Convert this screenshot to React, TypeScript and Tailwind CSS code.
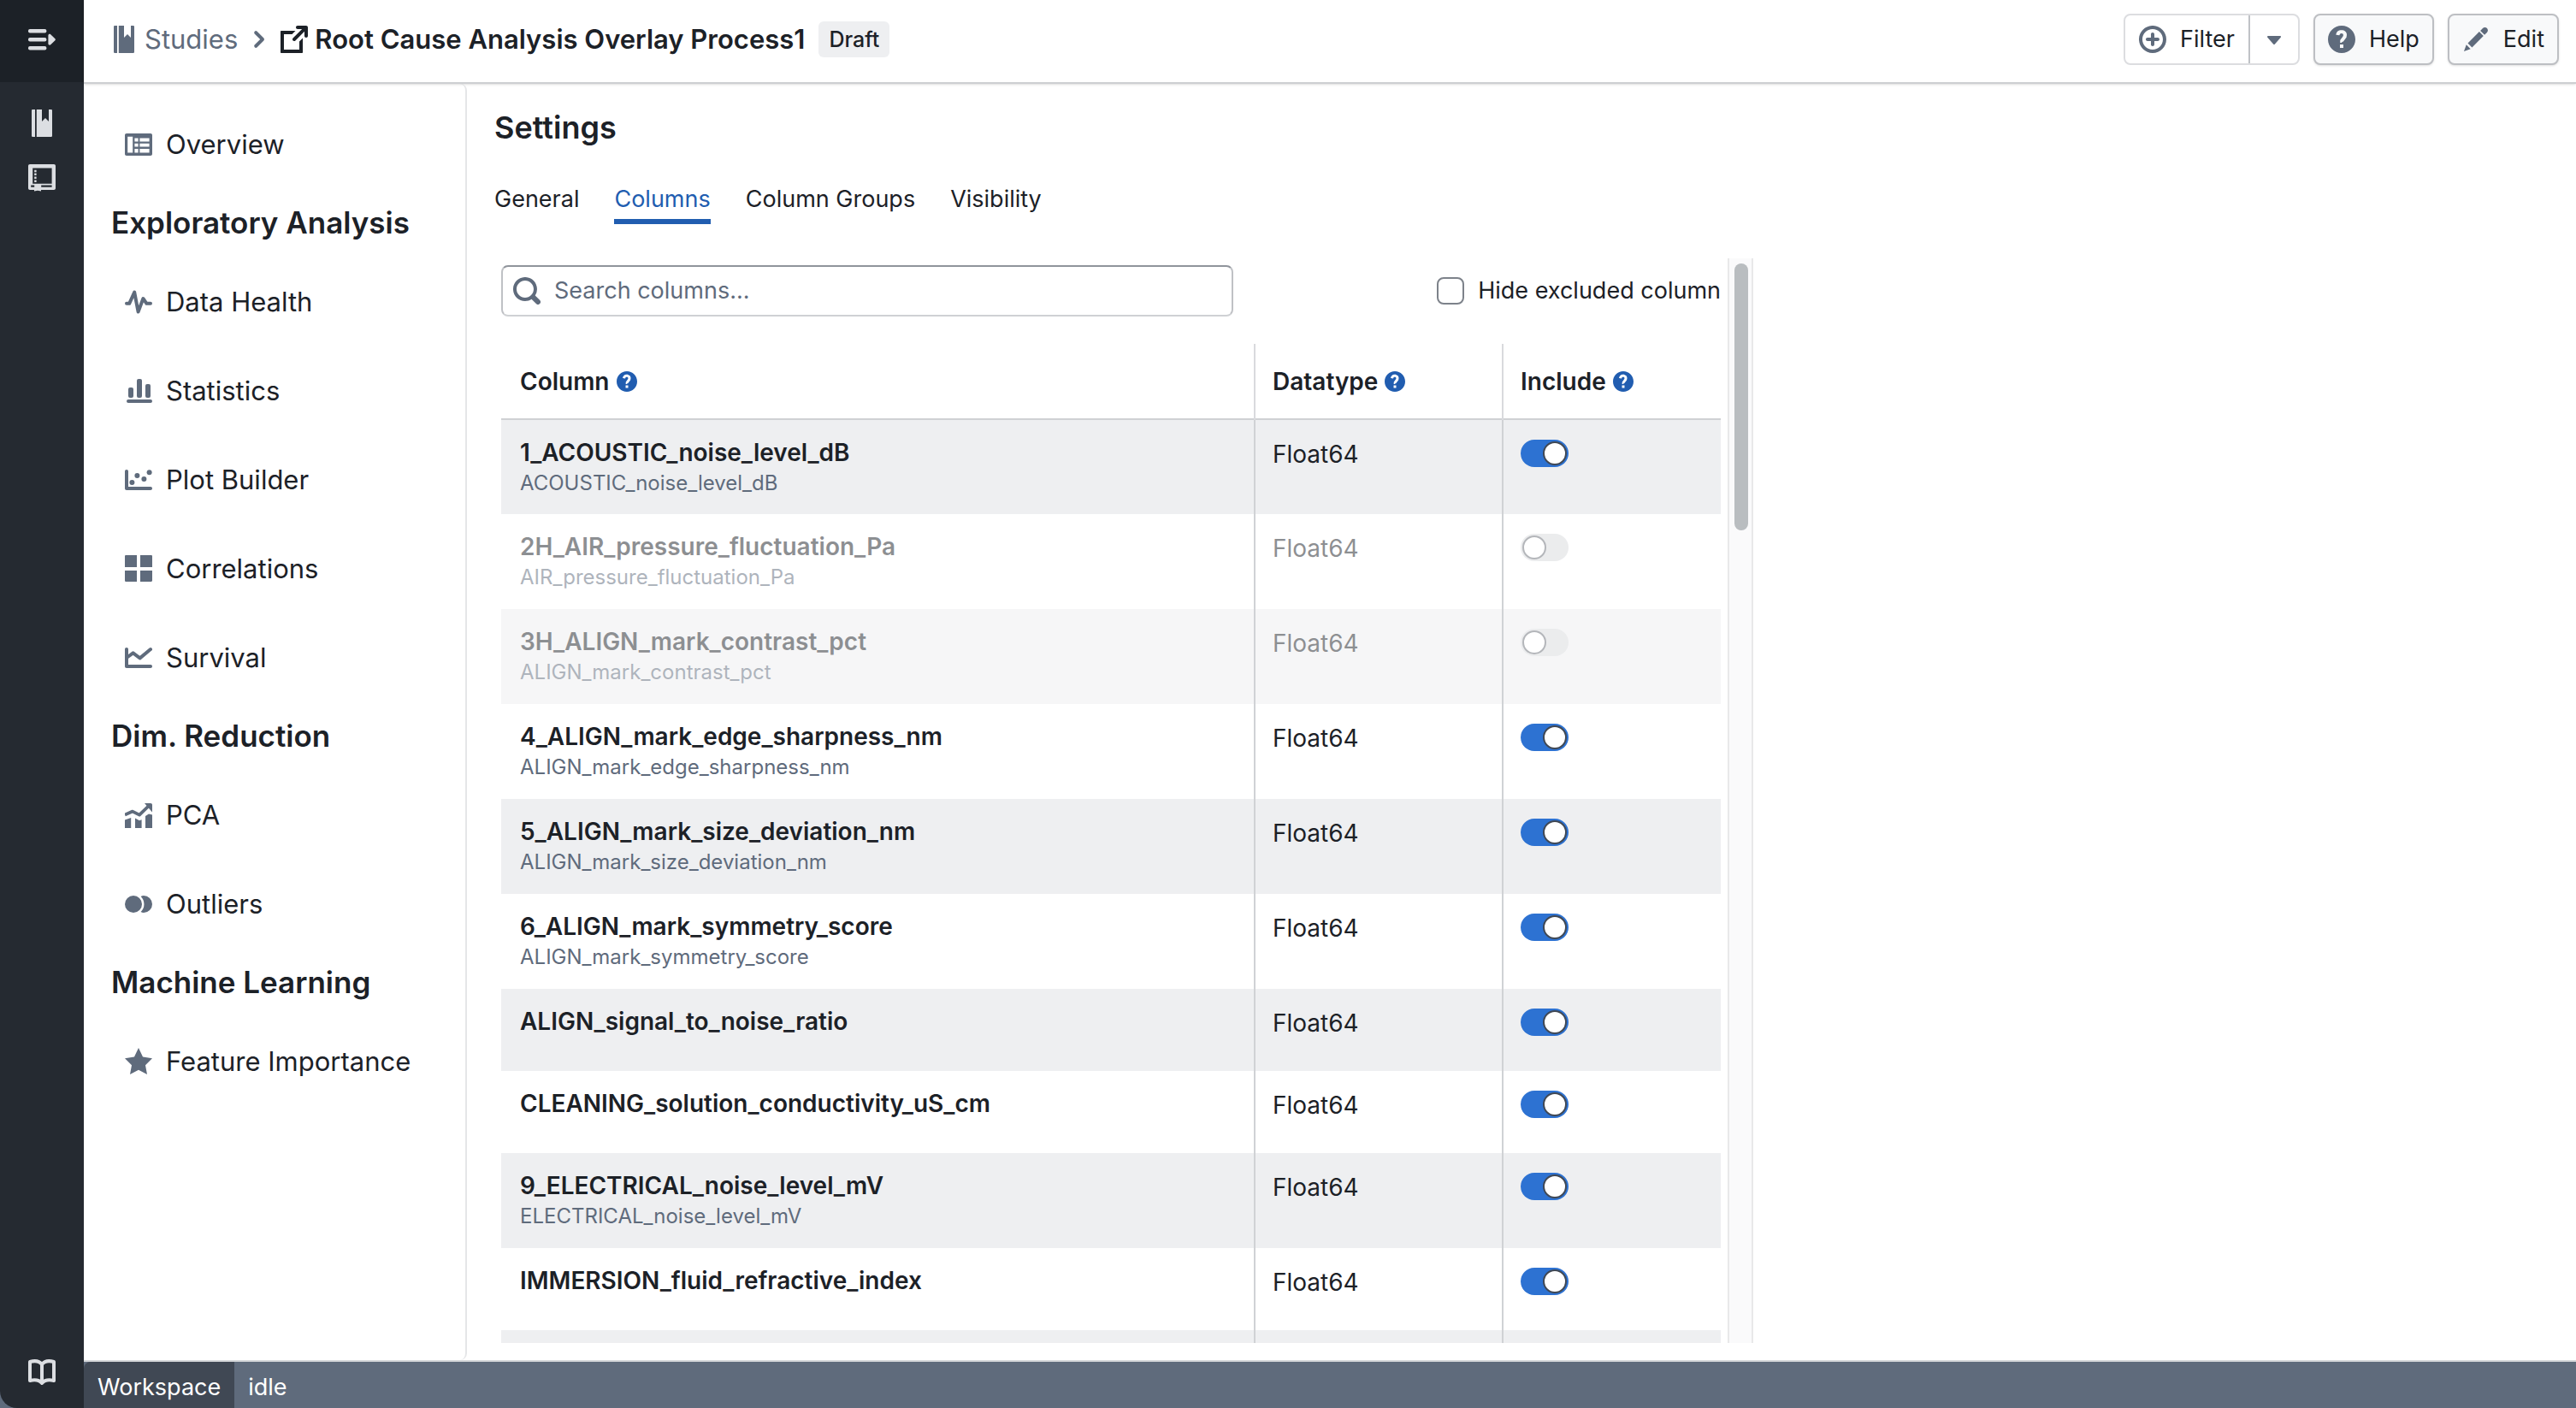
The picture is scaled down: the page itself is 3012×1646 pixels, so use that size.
import type { ReactNode } from "react";

function Icon({ size = 32, className = "", children }: { size?: number; className?: string; children: ReactNode }) {
  return (
    <svg width={size} height={size} viewBox="0 0 16 16" fill="currentColor" aria-hidden="true" className={`shrink-0 ${className}`}>
      {children}
    </svg>
  );
}

const icons = {
  menuOpen: (
    <>
      <rect x="0" y="2" width="10.7" height="2.2" rx="1" />
      <rect x="0" y="7" width="10.7" height="2.2" rx="1" />
      <rect x="0" y="12" width="10.7" height="2.2" rx="1" />
      <path d="M11.7 5.7c0-.8.9-1.1 1.4-.6l2.6 2.5c.3.3.3.7 0 1l-2.6 2.500c-.5.5-1.400.2-1.400-.6z" />
    </>
  ),
  studies: (
    <>
      <path d="M2.600 0H4v16H2.600a.6.6 0 0 1-.6-.6V.6c0-.3.300-.6.6-.6z" />
      <path d="M4.900 0H8v7l2-2 2 2V0h1.400c.3 0 .6.3.6.6v14.800a.6.6 0 0 1-.6.6H4.900z" />
    </>
  ),
  notebook: (
    <>
      <path fillRule="evenodd" d="M1 0h14c.6 0 1 .4 1 1v13c0 .6-.4 1-1 1H7.500v.8L5.500 15.400l-2 .4V15H1c-.6 0-1-.4-1-1V1c0-.6.4-1 1-1zM2.600 2.300v9.100h11.200V2.300zM1.600 12.300v1.100h2v-1.100zM7.600 12.300v1.100h6.200v-1.100z" />
      <path d="M3.600 3.400h1.200v1.200H3.600zM3.600 5.300h1.200v1.200H3.600zM3.600 7.300h1.200v1.200H3.600zM3.600 9.300h1.200v1.200H3.600z" />
    </>
  ),
  manual: (
    <path
      fill="none"
      stroke="currentColor"
      strokeWidth="2"
      strokeLinejoin="round"
      strokeLinecap="round"
      d="M8 3.500C6.500 1.500 3.500 1.300 1 2v11c2.500-.6 5.500-.3 7 1.500 1.500-1.800 4.500-2.100 7-1.500V2c-2.500-.7-5.500-.5-7 1.500zm0 0v10.500"
    />
  ),
  chevron: <path d="M10.700 7.300l-4-4a1 1 0 0 0-1.400 1.400L8.600 8l-3.300 3.300a1 1 0 0 0 1.400 1.400l4-4a1 1 0 0 0 0-1.400z" />,
  share: (
    <>
      <path d="M10.990 13.990h-9v-9h4.760l2-2H.500c-.3 0-.5.2-.5.5v12c0 .3.200.5.5.5h12c.3 0 .5-.2.500-.5V7.240l-2 2v4.750z" />
      <path d="M14.990 0h-5c-.55 0-1 .45-1 1s.45 1 1 1h2.590L7.290 7.290a1 1 0 0 0-.3.7 1.003 1.003 0 0 0 1.710.710l5.290-5.290V6c0 .55.45 1 1 1s1-.45 1-1V1c0-.55-.45-1-1-1z" />
    </>
  ),
  add: (
    <path d="M10.990 6.990h-2v-2c0-.55-.45-1-1-1s-1 .45-1 1v2h-2c-.55 0-1 .45-1 1s.45 1 1 1h2v2c0 .55.45 1 1 1s1-.45 1-1v-2h2c.55 0 1-.45 1-1s-.45-1-1-1zm-3-7c-4.420 0-8 3.580-8 8s3.580 8 8 8 8-3.580 8-8-3.580-8-8-8zm0 14c-3.310 0-6-2.690-6-6s2.690-6 6-6 6 2.690 6 6-2.690 6-6 6z" />
  ),
  caret: <path d="M12 6.500c0-.28-.22-.5-.5-.5h-7a.495.495 0 0 0-.37.830l3.500 4c.09.1.22.17.37.17s.28-.07.370-.170l3.500-4c.08-.09.13-.2.13-.33z" />,
  help: (
    <path d="M8 0C3.580 0 0 3.580 0 8s3.580 8 8 8 8-3.580 8-8-3.580-8-8-8zm1 13H7v-2h2v2zm1.930-6.520c-.14.320-.350.640-.620.970L9.250 8.830c-.12.150-.240.290-.280.420-.4.130-.9.300-.9.520V10H7.120V8.880s.05-.51.210-.71L8.400 6.730c.22-.26.350-.490.440-.680.090-.190.120-.380.120-.580 0-.3-.1-.550-.280-.750-.180-.190-.440-.280-.760-.280-.330 0-.590.100-.780.290-.190.190-.330.460-.4.810a.2.200 0 0 1-.200.110l-1.700-.250c-.12-.01-.160-.080-.140-.170.140-.83.470-1.470.980-1.930.530-.480 1.250-.720 2.150-.720.470 0 .9.070 1.290.220s.72.340 1 .590c.280.250.490.550.650.890.150.350.220.720.220 1.120s-.07.750-.21 1.080z" />
  ),
  edit: (
    <path d="M3.250 10.260l2.470 2.470 6.690-6.690-2.460-2.480-6.700 6.700zM.990 14.990l3.860-1.390-2.460-2.440-1.400 3.830zm12.250-14c-.480 0-.92.200-1.240.510l-1.440 1.440 2.470 2.470 1.440-1.440c.32-.32.510-.750.510-1.240.010-.950-.770-1.740-1.740-1.740z" />
  ),
  search: (
    <path d="M15.550 13.430l-2.670-2.680a6.940 6.940 0 0 0 1.110-3.760c0-3.870-3.130-7-7-7s-7 3.130-7 7 3.130 7 7 7c1.390 0 2.680-.42 3.760-1.110l2.680 2.670a1.498 1.498 0 1 0 2.120-2.120zm-8.560-1.440c-2.760 0-5-2.240-5-5s2.240-5 5-5 5 2.240 5 5-2.240 5-5 5z" />
  ),
  overview: (
    <path fillRule="evenodd" d="M1 1.500h14c.6 0 1 .4 1 1v11c0 .6-.4 1-1 1H1c-.6 0-1-.4-1-1v-11c0-.6.4-1 1-1zM1.600 3.400v9.300h3V3.400zM5.700 4.200v2.100h2.100V4.200zM8.700 4.200v2.100h5.600V4.200zM5.700 7.400v1.900h2.100V7.400zM8.700 7.400v1.900h5.600V7.400zM5.700 10.500v2.200h2.100v-2.200zM8.700 10.500v2.200h5.600v-2.200z" />
  ),
  pulse: (
    <path fill="none" stroke="currentColor" strokeWidth="2" strokeLinecap="round" strokeLinejoin="round" d="M1 8.900h1.600L5.600 2.300l2.200 11.500L10.700 6l2 2.900H15" />
  ),
  bars: (
    <>
      <rect x="1" y="13" width="15" height="2" rx="1" />
      <rect x="2" y="6" width="3" height="6" rx="1" />
      <rect x="7" y="1" width="3" height="11" rx="1" />
      <rect x="12" y="4" width="3" height="8" rx="1" />
    </>
  ),
  scatter: (
    <>
      <path d="M1 2c-.6 0-1 .4-1 1v10c0 .6.4 1 1 1h14c.6 0 1-.4 1-1s-.4-1-1-1H2V3c0-.6-.4-1-1-1z" />
      <circle cx="4.200" cy="9.500" r="1.500" />
      <circle cx="7.200" cy="5.500" r="1.500" />
      <circle cx="11.200" cy="7.500" r="1.500" />
      <circle cx="14.300" cy="3.600" r="1.500" />
    </>
  ),
  grid: <path d="M.6 0H7v7H0V.6C0 .3.300 0 .6 0zM9 0h6.400c.3 0 .6.300.6.600V7H9zM0 9h7v6.500H.6a.6.6 0 0 1-.6-.6zM9 9h7v5.900c0 .3-.3.600-.6.600H9z" />,
  line: (
    <>
      <path d="M1 2c-.6 0-1 .4-1 1v10c0 .6.4 1 1 1h14c.6 0 1-.4 1-1s-.4-1-1-1H2V3c0-.6-.4-1-1-1z" />
      <path fill="none" stroke="currentColor" strokeWidth="2" strokeLinecap="round" strokeLinejoin="round" d="M1 8l3.800-2.800 4 3L15 3" />
    </>
  ),
  trend: (
    <>
      <path d="M0 10.800L3.600 9.500V15.500H0zM6 9.800l2.500 1.300 1.300-.5v4.900H6zM12 8.500l2-1.300 2 .6v7.700h-4z" />
      <path fill="none" stroke="currentColor" strokeWidth="1.900" strokeLinejoin="round" d="M0 7.800l4.500-2 4 2L14 2.500" />
      <path d="M11.500 1H15c.6 0 1 .4 1 1v4.200z" />
    </>
  ),
  overlap: (
    <>
      <circle cx="5" cy="8" r="5" />
      <path d="M9.300 3.500A6.200 6.200 0 0 1 9.300 12.500 5 5 0 0 0 11 13a5 5 0 0 0 0-10 5 5 0 0 0-1.700.5z" />
    </>
  ),
  star: <path d="M8 0l2.500 5.300 5.500.8-4 4 1 5.400-5-2.600-5 2.600 1-5.400-4-4 5.500-.8z" />,
};

const nav = [
  { items: [{ icon: icons.overview, label: "Overview" }] },
  {
    title: "Exploratory Analysis",
    items: [
      { icon: icons.pulse, label: "Data Health" },
      { icon: icons.bars, label: "Statistics" },
      { icon: icons.scatter, label: "Plot Builder" },
      { icon: icons.grid, label: "Correlations" },
      { icon: icons.line, label: "Survival" },
    ],
  },
  {
    title: "Dim. Reduction",
    items: [
      { icon: icons.trend, label: "PCA" },
      { icon: icons.overlap, label: "Outliers" },
    ],
  },
  { title: "Machine Learning", items: [{ icon: icons.star, label: "Feature Importance" }] },
];

const tabs = ["General", "Columns", "Column Groups", "Visibility"];

const rows = [
  { name: "1_ACOUSTIC_noise_level_dB", source: "ACOUSTIC_noise_level_dB", on: true },
  { name: "2H_AIR_pressure_fluctuation_Pa", source: "AIR_pressure_fluctuation_Pa", on: false },
  { name: "3H_ALIGN_mark_contrast_pct", source: "ALIGN_mark_contrast_pct", on: false },
  { name: "4_ALIGN_mark_edge_sharpness_nm", source: "ALIGN_mark_edge_sharpness_nm", on: true },
  { name: "5_ALIGN_mark_size_deviation_nm", source: "ALIGN_mark_size_deviation_nm", on: true },
  { name: "6_ALIGN_mark_symmetry_score", source: "ALIGN_mark_symmetry_score", on: true },
  { name: "ALIGN_signal_to_noise_ratio", on: true },
  { name: "CLEANING_solution_conductivity_uS_cm", on: true },
  { name: "9_ELECTRICAL_noise_level_mV", source: "ELECTRICAL_noise_level_mV", on: true },
  { name: "IMMERSION_fluid_refractive_index", on: true },
];

function Rail() {
  return (
    <aside className="flex w-[98px] shrink-0 flex-col items-center rounded-bl-[20px] bg-[#252a31] text-[#dcdee2]">
      <button aria-label="Expand menu" className="flex h-24 w-full items-center justify-center bg-[#1c2127] pb-1">
        <Icon>{icons.menuOpen}</Icon>
      </button>
      <button aria-label="Studies" className="mt-4 flex h-16 w-full items-center justify-center">
        <Icon>{icons.studies}</Icon>
      </button>
      <button aria-label="Notebooks" className="flex h-16 w-full items-center justify-center">
        <Icon>{icons.notebook}</Icon>
      </button>
      <button aria-label="Manual" className="mt-auto mb-[10px] flex h-16 w-full items-center justify-center">
        <Icon>{icons.manual}</Icon>
      </button>
    </aside>
  );
}

function Header() {
  return (
    <header className="relative flex h-[98px] shrink-0 items-center border-b-2 border-[#cdcfd2] pr-5 pb-1 pl-[31px] shadow-sm">
      <a href="#studies" className="flex items-center gap-2 text-[31px] text-[#5f6b7c]">
        <Icon>{icons.studies}</Icon>
        Studies
      </a>
      <Icon className="mx-[9px] text-[#5f6b7c]">{icons.chevron}</Icon>
      <h1 className="flex items-center gap-2 text-[31px] font-semibold">
        <Icon>{icons.share}</Icon>
        Root Cause Analysis Overlay Process1
      </h1>
      <span className="ml-4 rounded-md bg-[#eeeff1] px-3 text-[25px]/[42px] font-medium">Draft</span>
      <div className="ml-auto flex gap-4 text-[27px]">
        <div className="flex h-[60px] rounded-lg border-2 border-[#dcdde0]">
          <button className="flex items-center gap-4 border-r-2 border-[#bfc2c6] px-4">
            <Icon className="text-[#5f6b7c]">{icons.add}</Icon>
            Filter
          </button>
          <button aria-label="More filters" className="px-3 text-[#5f6b7c]">
            <Icon>{icons.caret}</Icon>
          </button>
        </div>
        <button className="flex h-[60px] items-center gap-4 rounded-lg border-2 border-[#bdbfc3] bg-[#f8f9fa] px-[15px] shadow-sm">
          <Icon className="text-[#5f6b7c]">{icons.help}</Icon>
          Help
        </button>
        <button className="flex h-[60px] items-center gap-4 rounded-lg border-2 border-[#bdbfc3] bg-[#f8f9fa] px-[15px] shadow-sm">
          <Icon className="text-[#5f6b7c]">{icons.edit}</Icon>
          Edit
        </button>
      </div>
    </header>
  );
}

function Sidebar() {
  return (
    <nav className="w-[448px] shrink-0 rounded-r-lg border-r-2 border-[#e5e6e8] pt-[19px]">
      {nav.map(({ title, items }) => (
        <section key={items[0].label}>
          {title && <h2 className="h-20 pl-8 text-[35px]/[78px] font-semibold">{title}</h2>}
          {items.map(({ icon, label }) => (
            <a key={label} href="#view" className="flex h-[104px] items-center gap-4 pl-12 text-[31px]">
              <Icon className="text-[#5f6b7c]">{icon}</Icon>
              {label}
            </a>
          ))}
        </section>
      ))}
    </nav>
  );
}

function HeadCell({ label }: { label: string }) {
  return (
    <th className="border-l-2 border-[#d9dadd] pl-5 text-left font-semibold first:border-l-0 first:pl-[22px]">
      <span className="flex items-center gap-2">
        {label}
        <Icon size={24} className="text-[#215db0]">{icons.help}</Icon>
      </span>
    </th>
  );
}

function Toggle({ label, on }: { label: string; on: boolean }) {
  return (
    <input
      type="checkbox"
      role="switch"
      aria-label={`Include ${label}`}
      defaultChecked={on}
      className="block h-8 w-14 appearance-none rounded-full bg-[#d8dadd] p-0.5 before:block before:size-7 before:rounded-full before:border-2 before:border-[#6b7078] before:bg-white checked:bg-[#2d72d2] checked:before:ml-6 checked:before:border-[#404854]"
    />
  );
}

function ColumnsTable() {
  return (
    <table className="mt-8 w-full table-fixed border-collapse text-[28px]/[36px]">
      <colgroup>
        <col />
        <col className="w-[290px]" />
        <col className="w-[255px]" />
      </colgroup>
      <thead>
        <tr className="h-[88px]">
          <HeadCell label="Column" />
          <HeadCell label="Datatype" />
          <HeadCell label="Include" />
        </tr>
      </thead>
      <tbody className="border-t-2 border-[#cfd1d4]">
        {rows.map(({ name, source, on }) => (
          <tr key={name} className={`align-top odd:bg-[#eeeff1] ${source ? "h-[111px]" : "h-24"} ${on ? "" : "opacity-50"}`}>
            <td className="pt-5 pl-[22px]">
              <p className="font-semibold">{name}</p>
              {source && <p className="text-[24px]/[36px] text-[#5f6b7c]">{source}</p>}
            </td>
            <td className="border-l-2 border-[#d0d2d5] pt-[22px] pl-5">Float64</td>
            <td className="border-l-2 border-[#d0d2d5] pt-[23px] pl-5">
              <Toggle label={name} on={on} />
            </td>
          </tr>
        ))}
        <tr className="h-24 bg-[#eeeff1]">
          <td />
          <td className="border-l-2 border-[#d0d2d5]" />
          <td className="border-l-2 border-[#d0d2d5]" />
        </tr>
      </tbody>
    </table>
  );
}

function Settings() {
  return (
    <main className="flex min-w-0 flex-1 flex-col pt-7 pb-5 pl-8">
      <h2 className="text-[36px]/[46px] font-semibold">Settings</h2>
      <div role="tablist" className="mt-8 flex gap-[41px] text-[27px]/[46px]">
        {tabs.map((tab) => (
          <button
            key={tab}
            role="tab"
            aria-selected={tab === "Columns"}
            className="h-[58px] border-b-6 border-transparent pt-1.5 aria-selected:border-[#215db0] aria-selected:text-[#215db0]"
          >
            {tab}
          </button>
        ))}
      </div>
      <div className="mt-10 flex min-h-0 w-[1472px] flex-1">
        <div className="min-w-0 flex-1 overflow-hidden pt-2 pr-2 pl-2">
          <div className="flex items-center justify-between">
            <label className="flex h-[60px] w-3/5 items-center gap-4 rounded-lg border-2 border-t-[#8f949b] border-x-[#bfc1c5] border-b-[#cfd1d4] px-3">
              <Icon className="text-[#5f6b7c]">{icons.search}</Icon>
              <input
                type="search"
                aria-label="Search columns"
                placeholder="Search columns..."
                className="w-full text-[27px] outline-none placeholder:text-[#5f6b7c]"
              />
            </label>
            <label className="flex items-center gap-4 text-[27px] whitespace-nowrap">
              <input type="checkbox" className="size-8 appearance-none rounded-lg border-2 border-[#7d828a] bg-white" />
              Hide excluded column
            </label>
          </div>
          <ColumnsTable />
        </div>
        <div className="w-[30px] shrink-0 border-x-2 border-[#e8e8e9] bg-[#fafafb] py-1.5 pr-1 pl-1.5">
          <div className="h-[312px] rounded-full bg-[#b9bdc0]" />
        </div>
      </div>
    </main>
  );
}

export default function App() {
  return (
    <div className="flex h-screen overflow-hidden bg-[#5f6b7c] font-['Inter','Noto_Sans',sans-serif] text-[#1c2127]">
      <Rail />
      <div className="flex min-w-0 flex-1 flex-col bg-white">
        <Header />
        <div className="flex min-h-0 flex-1">
          <Sidebar />
          <Settings />
        </div>
        <footer className="flex h-14 shrink-0 overflow-hidden border-t-2 border-[#d5d7da] bg-[#5f6b7c] text-[27px]/[60px] text-white">
          <span className="rounded-tl-lg bg-[#404854] px-4">Workspace</span>
          <span className="px-4">idle</span>
        </footer>
      </div>
    </div>
  );
}
